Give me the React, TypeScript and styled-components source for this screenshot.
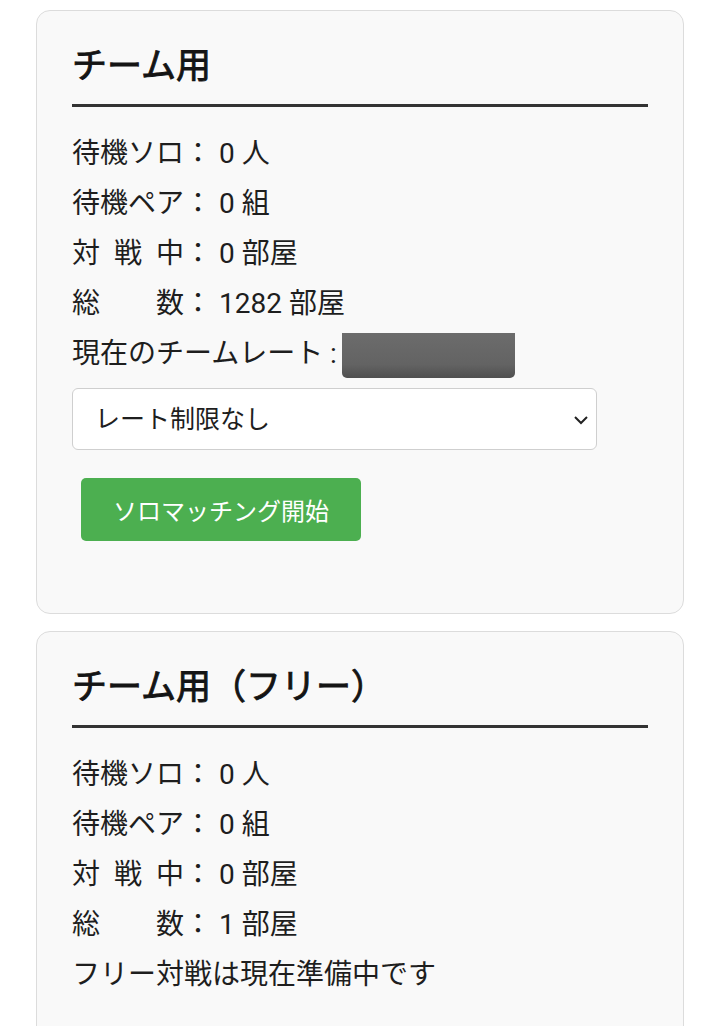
import * as React from "react";
import styled, { createGlobalStyle } from "styled-components";

const GlobalStyle = createGlobalStyle`
  html, body {
    margin: 0;
    padding: 0;
    background: #ffffff;
  }
  body {
    font-family: Roboto, "Noto Sans CJK JP", sans-serif;
    color: #1e1e1e;
  }
`;

const Page = styled.div`
  display: flex;
  flex-direction: column;
  gap: 17px;
  padding: 10px 36px 0;
`;

const Card = styled.section`
  box-sizing: border-box;
  width: 648px;
  padding: 35px 35px 72px;
  background: #f9f9f9;
  border: 1px solid #dcdcdc;
  border-radius: 14px;
`;

const Title = styled.h2`
  margin: 0;
  padding-bottom: 16px;
  font-size: 35px;
  line-height: 42px;
  font-weight: 400;
  -webkit-text-stroke: 0.9px #141414;
  color: #141414;
  border-bottom: 3px solid #333333;
`;

const StatList = styled.div`
  margin-top: 19px;
  display: flex;
  flex-direction: column;
`;

const Row = styled.div`
  display: flex;
  align-items: center;
  height: 50px;
  font-size: 28px;
  white-space: nowrap;
`;

const Label = styled.span`
  display: inline-block;
  width: 4em;
  text-align: justify;
  text-align-last: justify;
`;

const Colon = styled.span`
  margin-right: 7px;
`;

const Hidden = styled.span`
  display: inline-block;
  width: 173px;
  height: 45px;
  margin: 9px 0 0 5px;
  background: linear-gradient(180deg, #6c6c6c 0%, #636363 70%, #4f4f4f 100%);
  border-radius: 0 0 5px 5px;
`;

const SelectBox = styled.div`
  position: relative;
  width: 525px;
  margin-top: 12px;
`;

const Select = styled.select`
  box-sizing: border-box;
  width: 100%;
  height: 62px;
  padding: 0 0 0 22px;
  font-family: Roboto, "Noto Sans CJK JP", sans-serif;
  font-size: 25px;
  color: #1e1e1e;
  background: #ffffff;
  border: 1px solid #cfcfcf;
  border-radius: 6px;
  appearance: none;
  -webkit-appearance: none;
  outline: none;
`;

const Chevron = styled.svg`
  position: absolute;
  right: 8px;
  top: 27px;
  pointer-events: none;
`;

const StartButton = styled.button`
  display: block;
  box-sizing: border-box;
  width: 280px;
  height: 63px;
  margin: 28px 0 0 9px;
  padding: 0;
  font-family: Roboto, "Noto Sans CJK JP", sans-serif;
  font-size: 24px;
  color: #ffffff;
  background: #4caf50;
  border: none;
  border-radius: 5px;
  cursor: pointer;
`;

type Stat = { label: string; value: string };

function Stats({ items }: { items: Stat[] }) {
  return (
    <>
      {items.map((s) => (
        <Row key={s.label}>
          <Label>{s.label}</Label>
          <Colon>：</Colon>
          {s.value}
        </Row>
      ))}
    </>
  );
}

export default function App() {
  const teamStats: Stat[] = [
    { label: "待機ソロ", value: "0 人" },
    { label: "待機ペア", value: "0 組" },
    { label: "対戦中", value: "0 部屋" },
    { label: "総数", value: "1282 部屋" },
  ];
  const freeStats: Stat[] = [
    { label: "待機ソロ", value: "0 人" },
    { label: "待機ペア", value: "0 組" },
    { label: "対戦中", value: "0 部屋" },
    { label: "総数", value: "1 部屋" },
  ];

  return (
    <>
      <GlobalStyle />
      <Page>
        <Card>
          <Title>チーム用</Title>
          <StatList>
            <Stats items={teamStats} />
            <Row>
              現在のチームレート :<Hidden />
            </Row>
          </StatList>
          <SelectBox>
            <Select defaultValue="none">
              <option value="none">レート制限なし</option>
            </Select>
            <Chevron width="16" height="10" viewBox="0 0 16 10">
              <path d="M2 2 L8 8 L14 2" fill="none" stroke="#222" strokeWidth="2" />
            </Chevron>
          </SelectBox>
          <StartButton>ソロマッチング開始</StartButton>
        </Card>
        <Card>
          <Title>チーム用（フリー）</Title>
          <StatList>
            <Stats items={freeStats} />
            <Row>フリー対戦は現在準備中です</Row>
          </StatList>
        </Card>
      </Page>
    </>
  );
}
